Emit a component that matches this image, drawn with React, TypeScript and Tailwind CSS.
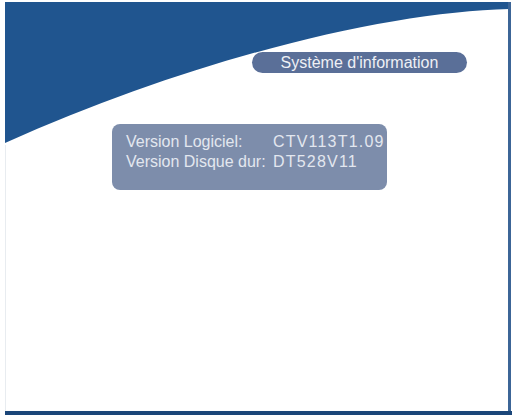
import React from "react";

export default function App() {
  return (
    <div className="relative w-[512px] h-[415px] bg-white overflow-hidden" style={{ fontFamily: '"Liberation Sans", Arial, sans-serif' }}>
      <svg className="absolute inset-0" width="512" height="415" viewBox="0 0 512 415">
        <path d="M5,2 L509,2 L509,9 C390,12 200,56 5,143 Z" fill="#20558f" />
        <rect x="508" y="2" width="3" height="410" fill="#3c6597" />
        <rect x="5" y="145" width="1" height="267" fill="#e8ecf0" />
        <rect x="5" y="411" width="507" height="4" fill="#1b4679" />
      </svg>
      <div className="relative flex flex-col">
        <div className="flex pt-[52px] pl-[252px]">
          <div className="w-[215px] h-[21px] rounded-full bg-[#5a6f98] flex items-center justify-center text-[#eef0f5] text-[16px] leading-none pt-[1px]">
            Système d'information
          </div>
        </div>
        <div className="flex pt-[51px] pl-[112px]">
          <div className="w-[275px] h-[66px] rounded-[8px] bg-[#7d8dab] pl-[14px] pt-[8px] text-[#e3e7ef] text-[16px] leading-[20px]">
            <div className="flex"><span className="w-[147px]">Version Logiciel:</span><span className="tracking-[1.2px]">CTV113T1.09</span></div>
            <div className="flex"><span className="w-[147px]">Version Disque dur:</span><span className="tracking-[1.2px]">DT528V11</span></div>
          </div>
        </div>
      </div>
    </div>
  );
}
